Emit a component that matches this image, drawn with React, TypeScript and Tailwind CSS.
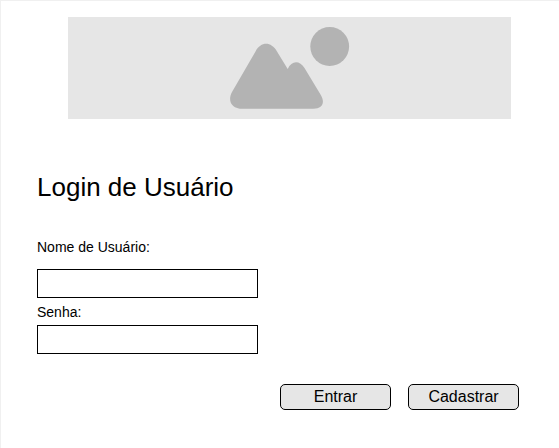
import React from "react";

function Banner() {
  return (
    <div className="ml-[67px] h-[102px] w-[443px] bg-[#e6e6e6]">
      <svg className="block" width="443" height="102" viewBox="68 17 443 102" fill="#b3b3b3">
        <circle cx="329.7" cy="46.500" r="19.400" />
        <path d="M232 92 L255.500 51.500 C261 41.300 271 41.300 277 51.500 L287.700 69 C291.500 60.500 299.500 60 304.500 68 L320.500 94.500 C325.500 102.500 322.500 108.800 313.500 108.800 L242.500 108.800 C231.500 108.800 227.300 101 232 92 Z" />
      </svg>
    </div>
  );
}

function Field({ label, id }: { label: string; id: string }) {
  return (
    <>
      <label htmlFor={id} className="text-[14px] leading-[16px]">{label}</label>
      <input id={id} className="h-[29px] w-[221px] border border-black bg-white px-2 text-sm outline-none" />
    </>
  );
}

function Button({ children }: { children: string }) {
  return (
    <button className="h-[26px] w-[111px] rounded-[5px] border border-black bg-[#e6e6e6] text-[16px] leading-[24px]">
      {children}
    </button>
  );
}

export default function App() {
  return (
    <main className="h-[448px] w-[559px] overflow-hidden border-t border-l border-[#f0f0f0] bg-white pt-4 font-['Liberation_Sans',Arial,sans-serif] text-black">
      <Banner />
      <h1 className="mt-[53px] ml-9 text-[26px] leading-[30px]">Login de Usuário</h1>
      <form className="ml-9">
        <div className="mt-[37px] flex flex-col items-start gap-[14px]">
          <Field id="nome" label="Nome de Usuário:" />
        </div>
        <div className="mt-[6px] flex flex-col items-start gap-[5px]">
          <Field id="senha" label="Senha:" />
        </div>
        <div className="mt-[30px] ml-[243px] flex gap-[17px]">
          <Button>Entrar</Button>
          <Button>Cadastrar</Button>
        </div>
      </form>
    </main>
  );
}
